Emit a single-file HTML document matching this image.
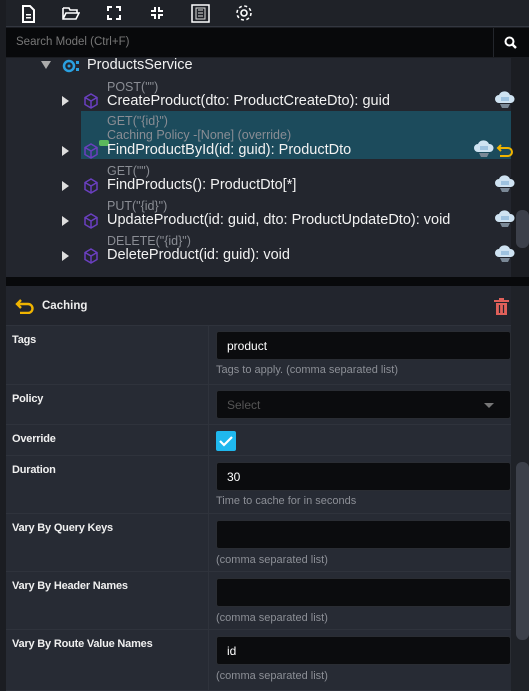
<!DOCTYPE html>
<html><head><style>
*{margin:0;padding:0;box-sizing:border-box}
body{width:529px;height:691px;background:#1b1d22;font-family:"Liberation Sans",sans-serif;position:relative;overflow:hidden;color:#e8e8e8}
.abs{position:absolute}
.tb{left:6px;top:0;width:523px;height:27px;background:#1f2228;border-bottom:1px solid #333740}
.search{left:6px;top:28px;width:523px;height:29px;background:#08090b}
.tree{left:6px;top:58px;width:505px;height:219px;background:#23262e}
.sb{background:#3c404a;border-radius:6px}
.t{position:absolute;font-size:14.5px;color:#f2f2f2;white-space:nowrap}
.s{position:absolute;font-size:12.5px;color:#8a8d94;white-space:nowrap}
.arr{position:absolute;width:0;height:0;border-left:7px solid #ddd;border-top:5px solid transparent;border-bottom:5px solid transparent}
.cube{position:absolute;width:16px;height:16px}
.cloud{position:absolute;width:20px;height:18px}
.hdr{left:6px;top:286px;width:505px;height:40px;background:#22252d;border-bottom:1px solid #2f333c}
.row{position:absolute;left:6px;width:505px;background:#272b34;border-bottom:1px solid #2f333c}
.lbl{position:absolute;left:6px;top:8px;font-size:11px;color:#f0f0f0;font-weight:bold;letter-spacing:-0.2px}
.val{position:absolute;left:202px;top:0;width:1px;height:100%;background:#2f333c}
.inp{position:absolute;left:210px;width:295px;height:29px;background:#0b0c0e;border:1px solid #2a2d33;border-radius:3px;font-size:12px;color:#fff;padding:7px 10px}
.help{position:absolute;left:210px;font-size:11px;color:#8c8f96}
</style></head><body>
<svg width="0" height="0" style="position:absolute"><defs>
<symbol id="cl" viewBox="0 0 20 18"><path d="M4 12a4 4 0 010-8 6 6 0 0111 0 4 4 0 011 8z" fill="#cfe3f2"/><rect x="6" y="6" width="8" height="4" fill="#9fc3e0"/><path d="M5 13h10l-2 4H7z" fill="#7a8896"/></symbol>
<symbol id="cb" viewBox="0 0 16 16"><path d="M8 1l6 3.5v7L8 15l-6-3.5v-7zM2 4.5L8 8l6-3.5M8 8v7" fill="none" stroke="#6a3fc0" stroke-width="1.5"/></symbol>
</defs></svg>
<div class="abs tb"></div>
<svg class="abs" style="left:20px;top:5px" width="16" height="18" viewBox="0 0 16 18"><path d="M3 1h7l4 4v12H3z" fill="none" stroke="#fff" stroke-width="2"/><rect x="6" y="9" width="5" height="1.5" fill="#fff"/><rect x="6" y="12" width="5" height="1.5" fill="#fff"/></svg>
<svg class="abs" style="left:62px;top:7px" width="18" height="13" viewBox="0 0 18 13"><path d="M1 1h6l1 2h7v3M1 1v11h13l3-6H4L1 12" fill="none" stroke="#fff" stroke-width="1.6"/></svg>
<svg class="abs" style="left:107px;top:6px" width="14" height="14" viewBox="0 0 14 14"><path d="M1 5V1h4M9 1h4v4M13 9v4H9M5 13H1V9" fill="none" stroke="#fff" stroke-width="2"/></svg>
<svg class="abs" style="left:150px;top:6px" width="14" height="14" viewBox="0 0 14 14"><path d="M5 1v4H1M13 5H9V1M9 13V9h4M1 9h4v4" fill="none" stroke="#fff" stroke-width="2"/></svg>
<svg class="abs" style="left:191px;top:4px" width="19" height="19" viewBox="0 0 19 19"><rect x="1" y="1" width="17" height="17" fill="none" stroke="#fff" stroke-width="1.5"/><rect x="5" y="4" width="9" height="11" fill="none" stroke="#ddd" stroke-width="1"/><path d="M7 6h5M7 9h5M7 12h5" stroke="#ddd"/></svg>
<svg class="abs" style="left:234px;top:3px" width="20" height="20" viewBox="0 0 20 20"><circle cx="10" cy="10" r="3" fill="none" stroke="#fff" stroke-width="1.6"/><circle cx="10" cy="10" r="7" fill="none" stroke="#fff" stroke-width="1.6" stroke-dasharray="3 2.5"/></svg>
<div class="abs search"><span style="position:absolute;left:10px;top:8px;font-size:11.5px;color:#777">Search Model (Ctrl+F)</span>
<div style="position:absolute;right:0;top:0;width:36px;height:29px;border-left:1px solid #23262c"></div>
<svg style="position:absolute;right:12px;top:8px" width="13" height="13" viewBox="0 0 13 13"><circle cx="5.5" cy="5.5" r="4" fill="none" stroke="#fff" stroke-width="2"/><path d="M8.5 8.5l3.5 3.5" stroke="#fff" stroke-width="2.4"/></svg></div>
<div class="abs tree"></div>
<div class="abs sb" style="left:516px;top:210px;width:13px;height:38px"></div>
<div class="abs" style="left:81px;top:111px;width:430px;height:48px;background:#1c4b5c"></div>
<div class="abs" style="left:41px;top:61px;width:0;height:0;border-top:8px solid #aaa;border-left:5px solid transparent;border-right:5px solid transparent"></div>
<svg class="abs" style="left:62px;top:58px" width="18" height="16" viewBox="0 0 18 16"><circle cx="7" cy="8" r="5" fill="none" stroke="#2aa0e0" stroke-width="2.5"/><circle cx="7" cy="8" r="1.5" fill="#2aa0e0"/><rect x="14" y="3" width="3" height="3" fill="#2aa0e0"/><rect x="14" y="10" width="3" height="3" fill="#2aa0e0"/></svg>
<div class="t" style="left:87px;top:57px;font-size:14.5px">ProductsService</div>

<div class="s" style="left:107px;top:80px">POST("")</div>
<div class="arr" style="left:62px;top:96px"></div>
<svg class="cube" style="left:83px;top:93px"><use href="#cb"/></svg>
<div class="t" style="left:107px;top:93px">CreateProduct(dto: ProductCreateDto): guid</div>
<svg class="cloud" style="left:495px;top:91px"><use href="#cl"/></svg>

<div class="s" style="left:107px;top:114px">GET("{id}")</div>
<div class="s" style="left:107px;top:128px">Caching Policy -[None] (override)</div>
<div class="arr" style="left:62px;top:146px"></div>
<svg class="cube" style="left:83px;top:143px"><use href="#cb"/></svg>
<div class="abs" style="left:99px;top:140px;width:10px;height:6px;background:#5cb85c;border-radius:2px"></div>
<div class="t" style="left:107px;top:142px">FindProductById(id: guid): ProductDto</div>
<svg class="cloud" style="left:474px;top:140px"><use href="#cl"/></svg>
<svg class="abs" style="left:496px;top:143px" width="18" height="14" viewBox="0 0 18 14"><path d="M5 2L2 5l3 3M2 5h10a4 4 0 010 8H4" fill="none" stroke="#f0b400" stroke-width="2"/></svg>

<div class="s" style="left:107px;top:164px">GET("")</div>
<div class="arr" style="left:62px;top:181px"></div>
<svg class="cube" style="left:83px;top:178px"><use href="#cb"/></svg>
<div class="t" style="left:107px;top:177px">FindProducts(): ProductDto[*]</div>
<svg class="cloud" style="left:495px;top:175px"><use href="#cl"/></svg>

<div class="s" style="left:107px;top:199px">PUT("{id}")</div>
<div class="arr" style="left:62px;top:216px"></div>
<svg class="cube" style="left:83px;top:213px"><use href="#cb"/></svg>
<div class="t" style="left:107px;top:212px">UpdateProduct(id: guid, dto: ProductUpdateDto): void</div>
<svg class="cloud" style="left:495px;top:210px"><use href="#cl"/></svg>

<div class="s" style="left:107px;top:234px">DELETE("{id}")</div>
<div class="arr" style="left:62px;top:251px"></div>
<svg class="cube" style="left:83px;top:248px"><use href="#cb"/></svg>
<div class="t" style="left:107px;top:247px">DeleteProduct(id: guid): void</div>
<svg class="cloud" style="left:495px;top:245px"><use href="#cl"/></svg>

<div class="abs" style="left:6px;top:277px;width:523px;height:9px;background:#08090b"></div>
<div class="abs hdr">
<svg style="position:absolute;left:9px;top:12px" width="20" height="16" viewBox="0 0 20 16"><path d="M6 2L2 6l4 4M2 6h11a4.5 4.5 0 010 9H5" fill="none" stroke="#f0b400" stroke-width="2.4"/></svg>
<span style="position:absolute;left:36px;top:14px;font-size:11.5px;font-weight:bold;color:#eee">Caching</span>
<svg style="position:absolute;right:2px;top:12px" width="15" height="17" viewBox="0 0 15 17"><rect x="0" y="2" width="15" height="2" fill="#e0605a"/><rect x="5" y="0" width="5" height="2" fill="#e0605a"/><path d="M2 5h11v12H2z" fill="#e0605a"/><path d="M5.5 7v8M9.5 7v8" stroke="#22252d" stroke-width="1.2"/></svg>
</div>

<div class="row" style="top:326px;height:59px"><div class="val"></div><div class="lbl">Tags</div><div class="inp" style="top:5px">product</div><div class="help" style="top:38px">Tags to apply. (comma separated list)</div></div>
<div class="row" style="top:385px;height:40px"><div class="val"></div><div class="lbl">Policy</div><div class="inp" style="top:5px;color:#555">Select<span style="position:absolute;right:16px;top:12px;border-top:5px solid #777;border-left:5px solid transparent;border-right:5px solid transparent"></span></div></div>
<div class="row" style="top:425px;height:31px"><div class="val"></div><div class="lbl">Override</div>
<div style="position:absolute;left:210px;top:6px;width:20px;height:20px;background:#1fb8ee;border-radius:2px"><svg width="20" height="20"><path d="M4 10l4 4 8-8" fill="none" stroke="#fff" stroke-width="2.2"/></svg></div></div>
<div class="row" style="top:456px;height:58px"><div class="val"></div><div class="lbl">Duration</div><div class="inp" style="top:6px">30</div><div class="help" style="top:39px">Time to cache for in seconds</div></div>
<div class="row" style="top:514px;height:58px"><div class="val"></div><div class="lbl">Vary By Query Keys</div><div class="inp" style="top:6px"></div><div class="help" style="top:40px">(comma separated list)</div></div>
<div class="row" style="top:572px;height:58px"><div class="val"></div><div class="lbl">Vary By Header Names</div><div class="inp" style="top:6px"></div><div class="help" style="top:40px">(comma separated list)</div></div>
<div class="row" style="top:630px;height:61px"><div class="val"></div><div class="lbl">Vary By Route Value Names</div><div class="inp" style="top:6px">id</div><div class="help" style="top:40px">(comma separated list)</div></div>
<div class="abs" style="left:511px;top:286px;width:18px;height:405px;background:#1f2228"></div>
<div class="abs sb" style="left:516px;top:462px;width:13px;height:178px"></div>
</body></html>
